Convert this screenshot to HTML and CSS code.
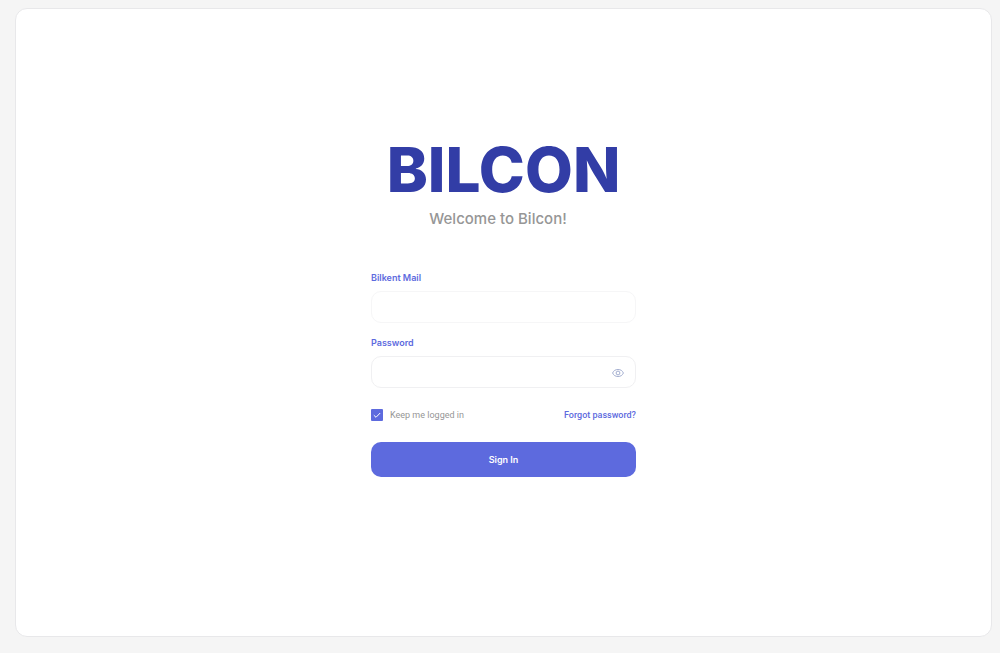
FILE: index.html
```html
<!DOCTYPE html>
<html lang="en">
<head>
  <meta charset="utf-8">
  <meta name="viewport" content="width=device-width, initial-scale=1">
  <title>Bilcon</title>
  <link rel="stylesheet" href="styles.css">
</head>
<body>
  <main class="card">
    <form class="login">
      <header class="intro">
        <h1 class="brand">BILCON</h1>
        <p class="welcome">Welcome to Bilcon!</p>
      </header>
      <div class="field">
        <label class="label" for="mail">Bilkent Mail</label>
        <input class="input input-mail" id="mail" type="email">
      </div>
      <div class="field">
        <label class="label" for="password">Password</label>
        <div class="password-box">
          <input class="input" id="password" type="password">
          <button class="reveal" type="button" aria-label="Show password">
            <svg width="12" height="10" viewBox="0 0 12 10" fill="none" stroke="currentColor" aria-hidden="true">
              <path d="M.6 5C1.600 2.600 3.500 1.500 6 1.500S10.400 2.600 11.400 5C10.400 7.400 8.500 8.500 6 8.500S1.600 7.400.6 5Z"/>
              <circle cx="6" cy="5" r="1.900"/>
            </svg>
          </button>
        </div>
      </div>
      <div class="options">
        <label class="keep"><input class="check" type="checkbox" checked>Keep me logged in</label>
        <a class="forgot" href="#">Forgot password?</a>
      </div>
      <button class="submit" type="submit">Sign In</button>
    </form>
  </main>
</body>
</html>
```
FILE: styles.css
```css
* {
  box-sizing: border-box;
}

body {
  margin: 0;
  padding: 8px 8px 16px 15px;
  min-height: 100vh;
  display: flex;
  background: #f5f5f5;
  font-family: "Inter", "Liberation Sans", sans-serif;
}

.card {
  flex: 1;
  display: flex;
  justify-content: center;
  align-items: flex-start;
  padding: 129px 16px 32px;
  border: 1px solid #e8e8ea;
  border-radius: 12px;
  background: #fff;
}

.login {
  width: 100%;
  max-width: 265px;
}

.intro {
  margin-bottom: 41px;
  text-align: center;
  white-space: nowrap;
}

.brand {
  margin: 0;
  color: #323da6;
  font: 800 62px/64px "Inter", sans-serif;
}

.welcome {
  margin: 5px 0 0;
  padding-right: 11px;
  color: #969696;
  font: 500 15px/24px "Inter", sans-serif;
}

.field {
  margin-bottom: 14px;
}

.label {
  display: block;
  margin-bottom: 7px;
  color: #5d6ade;
  font: 600 9px/12px "Inter", sans-serif;
}

.input {
  display: block;
  width: 100%;
  height: 32px;
  padding: 0 32px 0 12px;
  border: 1px solid #f0f0f2;
  border-radius: 10px;
  background: #fff;
  color: #333;
  font: 400 10px "Inter", sans-serif;
}

.input-mail {
  border-color: #f6f6f7;
}

.password-box {
  position: relative;
}

.reveal {
  position: absolute;
  top: 0;
  right: 12px;
  height: 100%;
  display: flex;
  align-items: center;
  padding: 1px 0 0;
  border: 0;
  background: none;
  color: #a3aed0;
}

.options {
  display: flex;
  justify-content: space-between;
  align-items: center;
  margin: 21px 0;
  font: 400 9px/12px "Roboto", sans-serif;
}

.keep {
  display: flex;
  align-items: center;
  gap: 7px;
  color: #969696;
}

.check {
  appearance: none;
  width: 12px;
  height: 12px;
  margin: 0;
  border-radius: 1px;
  background: #5d6ade url("data:image/svg+xml,%3Csvg xmlns='http://www.w3.org/2000/svg' viewBox='0 0 12 12'%3E%3Cpath d='M2.800 6.200 5 8.300 9.200 4' fill='none' stroke='white'/%3E%3C/svg%3E") center / 12px;
}

.forgot {
  color: #5d6ade;
  font-weight: 500;
  text-decoration: none;
}

.submit {
  display: block;
  width: 100%;
  height: 35px;
  border: 0;
  border-radius: 10px;
  background: #5d6ade;
  color: #fff;
  font: 600 9px/12px "Inter", sans-serif;
}
```
